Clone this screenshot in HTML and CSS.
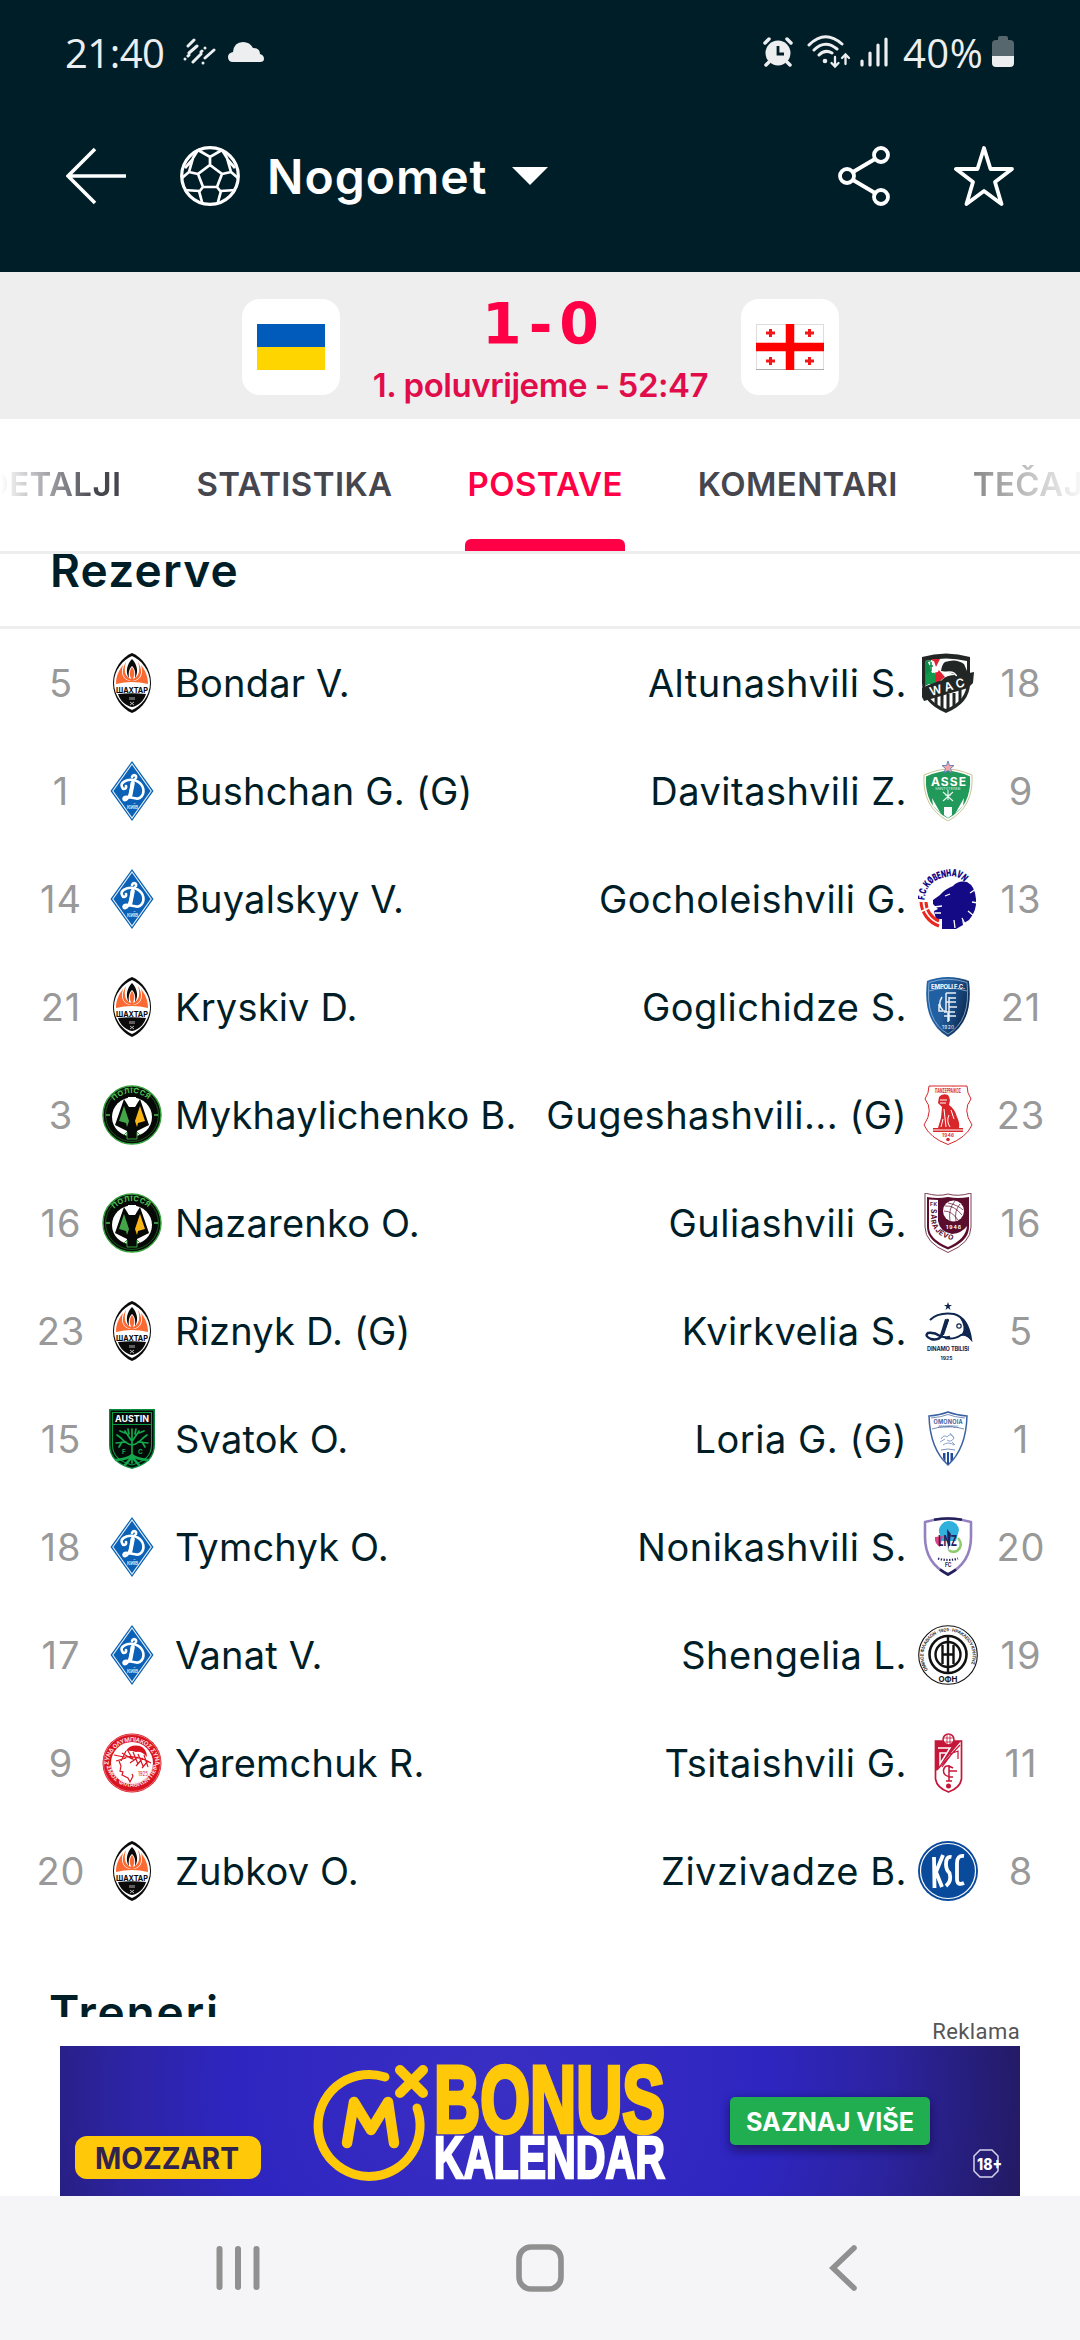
FILE: index.html
```html
<!DOCTYPE html>
<html lang="hr">

<head>
  <meta charset="UTF-8">
  <meta name="viewport" content="width=device-width, initial-scale=1.0">
  <title>Nogomet - Postave</title>
  <link rel="stylesheet" href="styles.css">
</head>

<body>
  <!-- club crests -->
  <svg class="defs" width="0" height="0">
    <defs>
      <linearGradient id="blueShade" x1="0" y1="0" x2="1" y2="0.4">
        <stop offset="0" stop-color="#1c62a8"/>
        <stop offset="0.5" stop-color="#235f9f"/>
        <stop offset="1" stop-color="#0c2c55"/>
      </linearGradient>

      <symbol id="shakhtar" viewBox="0 0 60 60">
        <path d="M30 0C40 4 49 16 49 30S40 56 30 60C20 56 11 44 11 30S20 4 30 0Z" fill="#0a0a0a"/>
        <path d="M30 3C39 7 48 17 48 30S39 53 30 57C21 53 12 43 12 30S21 7 30 3Z" fill="#fff"/>
        <path d="M21 12C17 17 14 23 14 31Q30 27 46 31C46 23 43 17 39 12C42 22 38 28 30 28S18 22 21 12Z" fill="#fa6a32"/>
        <path d="M24 9C18 19 21 27 30 28C39 27 42 19 36 9C39 19 36 25 30 26C24 25 21 19 24 9Z" fill="#fa6a32"/>
        <path d="M30 6C25 11 23 19 27 25C26 18 28 15 30 13C32 15 34 18 33 25C37 19 35 11 30 6Z" fill="#0a0a0a"/>
        <path d="M30 14C27 18 27 23 30 27C33 23 33 18 30 14Z" fill="#fa6a32"/>
        <text x="14" y="39.5" font-size="8" font-weight="700" textLength="32" lengthAdjust="spacingAndGlyphs" fill="#0a0a0a">ШАХТАР</text>
        <path d="M16 41Q30 39.500 44 41C42 48 36 53 30 54C24 53 18 48 16 41Z" fill="#0a0a0a"/>
        <path d="M28 44v3M30 44v3M32 44v3M28 49l4 3M32 49l-4 3" stroke="#ddd" stroke-width="0.800" fill="none"/>
      </symbol>

      <symbol id="dynamo" viewBox="0 0 60 60">
        <path d="M30 0L51.500 30L30 60L8.500 30Z" fill="#0a61b5"/>
        <path d="M30 3L49.200 30L30 57L10.800 30Z" fill="none" stroke="#e8f1fa" stroke-width="1.100"/>
        <path d="M30 16C31 13 35 14 34 17C33 19 31 19 30 22C29 30 29 34 25 38C22 41 20 37 23 36C30 35 37 42 41 33C43 26 38 20 31 19C24 18 18 22 20 26C21 29 25 28 24 25" fill="none" stroke="#fff" stroke-width="2.600" stroke-linecap="round"/>
        <path d="M31 21L28 36" stroke="#fff" stroke-width="4"/>
        <text x="25" y="47.500" font-size="5" font-weight="700" textLength="11" lengthAdjust="spacingAndGlyphs" fill="#d8e7f5">КИЇВ</text>
      </symbol>

      <symbol id="polissya" viewBox="0 0 60 60">
        <circle cx="30" cy="30" r="29" fill="#060906" stroke="#35a13c" stroke-width="1.400"/>
        <circle cx="30" cy="30" r="26.500" fill="none" stroke="#237a2b" stroke-width="0.700"/>
        <ellipse cx="30" cy="32" rx="20" ry="19.500" fill="#fff"/>
        <path d="M22 14L27 22H33L38 14L47 40L35 46V54H25V46L13 40Z" fill="#060906"/>
        <path d="M26 12h8v9h-8z" fill="#fff"/>
        <path d="M22 21L27 36L25 42L24 38L17 36Z" fill="#43a548"/>
        <path d="M38 21L33 36L35 42L36 38L43 36Z" fill="#f9b515"/>
        <path d="M22 50L25 47V54H35V47L38 50" stroke="#35a13c" stroke-width="1" fill="none"/>
        <path id="polArc" d="M12 16Q30 0 48 16" fill="none"/>
        <text font-size="7.500" font-weight="700" fill="#4fbf55"><textPath href="#polArc" textLength="38">ПОЛІССЯ</textPath></text>
        <path d="M4 30h4M52 30h4" stroke="#4fbf55" stroke-width="1.500"/>
      </symbol>

      <symbol id="austin" viewBox="0 0 60 60">
        <path d="M7 0H53V36Q53 54 30 60Q7 54 7 36Z" fill="#0a8a3c"/>
        <path d="M8.500 1.500H51.500V36Q51.500 53 30 58.500Q8.500 53 8.500 36Z" fill="#050a08"/>
        <path d="M10.500 3.500H49.500V36Q49.500 51 30 56Q10.500 51 10.500 36ZM10 15.500H50" fill="none" stroke="#0b9a42" stroke-width="1.100"/>
        <text x="13" y="12.800" font-size="9.500" font-weight="700" textLength="34" lengthAdjust="spacingAndGlyphs" fill="#fff">AUSTIN</text>
        <g fill="none" stroke="#12a84b" stroke-width="1.700" stroke-linecap="round">
          <path d="M30 54V33M30 34L30 20M30 36Q24 35 19 29M30 36Q36 35 41 29M29 31L23 22M31 31L37 22M24 33L14 34M36 33L46 34M19 29L15 26M41 29L45 26M23 24L18 22M37 24L42 22M20 33L17 38M40 33L43 38M27 25L26 20M33 25L34 20"/>
          <path d="M30 46Q26 50 14 51M30 46Q34 50 46 51M30 48L23 56M30 48L37 56" stroke-width="2.600"/>
        </g>
        <text x="20" y="45" font-size="6.500" font-weight="700" fill="#12a84b">F</text>
        <text x="36" y="45" font-size="6.500" font-weight="700" fill="#12a84b">C</text>
      </symbol>

      <symbol id="olympiacos" viewBox="0 0 60 60">
        <circle cx="30" cy="30" r="29.500" fill="#da1320"/>
        <circle cx="30" cy="30" r="21" fill="#fff"/>
        <circle cx="30" cy="30" r="28.500" fill="none" stroke="#f3a3a8" stroke-width="0.600"/>
        <path id="olyTop" d="M6.500 32A23.500 23.500 0 1 1 53.500 32" fill="none"/>
        <path id="olyBot" d="M4.500 33A26 26 0 0 0 55.500 33" fill="none"/>
        <text font-size="6" font-weight="700" fill="#fbdadb"><textPath href="#olyTop" textLength="74">ΣΥΝΔ ΟΛΥΜΠΙΑΚΟΣ ΣΥΝΔ</textPath></text>
        <text font-size="6" font-weight="700" fill="#fbdadb"><textPath href="#olyBot" textLength="72">ΣΜΟΣ ΦΙΛΑΘΛΩΝ ΠΕΙΡ</textPath></text>
        <path d="M24 18Q28 11 38 13Q45 16 45 24Q40 18 34 19Q28 17 24 18Z" fill="#da1320"/>
        <path d="M17 28L19 33L18 38L21 39L20 42L26 45L28 49L31 43L30 41M24 18L19 28M12 22L22 24M14 28L24 25M20 20L30 26M26 18L32 28M31 19L36 31M36 21L41 33M42 22L46 34M22 24Q36 22 49 30M28 30L36 24M34 33L41 25M40 35L46 28" fill="none" stroke="#da1320" stroke-width="1.200"/>
        <text x="36" y="43" font-size="5.500" fill="#da1320" textLength="10" lengthAdjust="spacingAndGlyphs">1925</text>
      </symbol>

      <symbol id="wac" viewBox="0 0 60 60">
        <path d="M4 4Q28 -3 52 4V30Q52 50 28 60Q4 50 4 30Z" fill="#222726"/>
        <path d="M7 8Q28 3 49 8V28Q49 48 28 56Q7 48 7 30Z" fill="#fff"/>
        <path d="M7 8L13 7V30L7 33Z" fill="#0b8a43"/>
        <path d="M14 16L22 28L14 31H8V22Z" fill="#12994b"/>
        <path d="M14 6H24L20 16L27 24L18 31L17 18Z" fill="#df2330"/>
        <path d="M10 9L16 8L18 14L22 6L25 6L20 19L14 20Z" fill="#fff"/>
        <path d="M13 9L13 18M10 13h5" stroke="#0b8a43" stroke-width="1.500"/>
        <path d="M27 9Q38 5 46 11L49 18V28H31L24 27Q28 22 38 22L30 19L23 18Q24 11 27 9Z" fill="#222726"/>
        <path d="M26 20Q36 17 39 24" fill="none" stroke="#fff" stroke-width="1.500"/>
        <path d="M18 43V52M24 42V56M30 41V57M36 40V55M42 37V50" stroke="#222726" stroke-width="3"/>
        <path d="M4 35Q22 26 56 19L55 30L50 35L6 48L4 44Z" fill="#222726"/>
        <text transform="translate(13 43) rotate(-16)" font-size="12" font-weight="600" textLength="36" fill="#fff">WAC</text>
      </symbol>

      <symbol id="asse" viewBox="0 0 60 60">
        <path d="M6 14Q20 8 30 8Q40 8 54 14Q56 46 30 60Q4 46 6 14Z" fill="#fff" stroke="#c2bd84" stroke-width="0.900"/>
        <path d="M8 15.500Q20 10 30 10Q40 10 52 15.500Q54 45 30 57.500Q6 45 8 15.500Z" fill="#20995a"/>
        <path d="M30 0L31.500 4.500H36L32.500 7.500L34 12L30 9.500L26 12L27.500 7.500L24 4.500H28.500Z" fill="#f2a7a9" stroke="#4f74b8" stroke-width="0.800"/>
        <text x="13" y="25" font-size="12" font-weight="700" textLength="35" fill="#fff">ASSE</text>
        <text x="17" y="28.800" font-size="4" textLength="26" fill="#cfeadb">SAINT-ÉTIENNE</text>
        <path d="M25 31l10 9M35 31l-10 9M30 29v10M27 34h6" stroke="#e8f6ee" stroke-width="1.100"/>
        <path d="M14 37L23 53L15 45ZM46 37L37 53L45 45ZM26 46h8v8l-4 3l-4-3z" fill="#fff"/>
      </symbol>

      <symbol id="kobenhavn" viewBox="0 0 60 60">
        <path d="M35 17Q40 11 49 13Q57 17 58 30Q59 42 51 51L46 54L44 50L45 56L38 60H24V50H18L16 42L20 40L15 35V31L22 26Q27 20 35 17Z" fill="#140a86"/>
        <path d="M52 24l6-4M54 33l6 1M50 42l6 5M44 49l3 6M36 51l1 8M16 38l8-1M27 27l5-2M17 44h6" stroke="#fff" stroke-width="1.300" fill="none"/>
        <path id="kobArc" d="M6.500 31Q8 12 28 8Q38 5 45 12" fill="none"/>
        <text font-size="10" font-weight="900" fill="#140a86"><textPath href="#kobArc" textLength="54" lengthAdjust="spacingAndGlyphs">F.C.KØBENHAVN</textPath></text>
        <path d="M3 33A27 27 0 0 0 21 57" fill="none" stroke="#e8281e" stroke-width="3"/>
        <path d="M8 33A21 21 0 0 0 21 52" fill="none" stroke="#e8281e" stroke-width="3"/>
        <path d="M2 43L11 39" stroke="#fff" stroke-width="1.500"/>
      </symbol>

      <symbol id="empoli" viewBox="0 0 60 60">
        <path d="M9 4Q30 -4 51 4Q56 45 30 60Q4 45 9 4Z" fill="url(#blueShade)"/>
        <path d="M11 5.500Q30 -1 49 5.500Q53 44 30 57Q7 44 11 5.500Z" fill="none" stroke="#a9c6e4" stroke-width="0.700"/>
        <path d="M11 14Q30 8 49 14" fill="none" stroke="#a9c6e4" stroke-width="0.700"/>
        <text x="13" y="11.500" font-size="6" font-weight="700" textLength="34" fill="#fff">EMPOLI F.C.</text>
        <path d="M28 16H38M28 16V35M28 25H38M26 35H37M31 20V44M31 21H38M31 30H39M31 39H38M24 20Q19 28 25 33M21 27V34H27M26 39H34M30 36V45" fill="none" stroke="#e7f0f8" stroke-width="1.500"/>
        <text x="24" y="52" font-size="4.800" textLength="12" fill="#fff">1920</text>
      </symbol>

      <symbol id="panserraikos" viewBox="0 0 60 60">
        <path d="M11 1H49Q49 8 53 14Q44 25 54 40Q48 53 30 59.500Q12 53 6 40Q16 25 7 14Q11 8 11 1Z" fill="#fff" stroke="#d8262a" stroke-width="1"/>
        <text x="17" y="7.500" font-size="5.500" font-weight="700" textLength="26" lengthAdjust="spacingAndGlyphs" fill="#d8262a">ΠΑΝΣΕΡΡΑΪΚΟΣ</text>
        <path d="M21 12Q24 8 30 10Q33 14 31 20Q37 24 39 32Q42 38 41 43H45V47H15V43H20L23 33L24 22L20 18Z" fill="#d8262a"/>
        <path d="M22 15h7M22 18h6M26 24l2 18M31 30q-3 6 1 12M25 34l-2 8M33 25l3 9M15 45h30" stroke="#fff" stroke-width="1" fill="none"/>
        <text x="24" y="52" font-size="4.500" font-weight="700" textLength="12" fill="#d8262a">1946</text>
        <circle cx="30" cy="54.500" r="1.800" fill="#d8262a"/>
      </symbol>

      <symbol id="sarajevo" viewBox="0 0 60 60">
        <path d="M7 0Q20 4 30 1Q40 4 53 0V34Q53 50 30 59.500Q7 50 7 34Z" fill="#fff" stroke="#6d2a42" stroke-width="0.900"/>
        <path d="M9 4Q20 6 30 4Q40 6 51 4V34Q51 48 30 56.500Q9 48 9 34Z" fill="#5a0d2c"/>
        <path d="M11 6.500L20 7V28Q22 39 34 41Q44 40 49 33Q48 46 30 54Q11 46 11 34Z" fill="#fff"/>
        <circle cx="35.500" cy="18" r="10.500" fill="#fff"/>
        <path d="M27 13Q36 12 44 22M26 18Q34 18 40 27M30 10Q40 12 45 17M37 8Q30 16 32 28M42 11Q36 18 38 28" fill="none" stroke="#5a0d2c" stroke-width="0.700"/>
        <text x="28" y="36" font-size="5" font-weight="700" textLength="15" fill="#fff">1946</text>
        <text x="12" y="13" font-size="5" font-weight="700" textLength="7" fill="#5a0d2c">FK</text>
        <path id="sarArc" d="M13 16V28Q16 45 40 48" fill="none"/>
        <text font-size="7" font-weight="700" fill="#5a0d2c"><textPath href="#sarArc" textLength="43">SARAJEVO</textPath></text>
      </symbol>

      <symbol id="tbilisi" viewBox="0 0 60 60">
        <path d="M30 1L31 4H34L31.500 5.800L32.500 9L30 7L27.500 9L28.500 5.800L26 4H29Z" fill="#0f2750"/>
        <path d="M12 19Q20 11 36 13Q50 17 53 38Q48 32 43 34Q36 39 27 37" fill="none" stroke="#0f2750" stroke-width="2"/>
        <path d="M40 14Q51 20 53 39Q47 33 42 35Q50 28 40 14Z" fill="#0f2750"/>
        <path d="M30 18Q27 27 24 34Q21 40 13 38Q6 35 10 32Q16 31 22 35Q27 37 32 36" fill="none" stroke="#0f2750" stroke-width="2.400"/>
        <path d="M27 18L31 19L26 34L22 34Z" fill="#0f2750"/>
        <circle cx="41" cy="25" r="2.200" fill="none" stroke="#0f2750" stroke-width="1.200"/>
        <text x="9" y="50" font-size="5.600" font-weight="700" textLength="42" fill="#0f2750">DINAMO TBILISI</text>
        <text x="22.500" y="58.500" font-size="5" font-weight="700" textLength="12" fill="#0f2750">1925</text>
      </symbol>

      <symbol id="omonoia" viewBox="0 0 60 60">
        <path d="M11 7Q22 6 30 3Q38 6 49 7Q48 40 30 56Q12 40 11 7Z" fill="#fff" stroke="#3d62a3" stroke-width="1.500"/>
        <path d="M13 9Q24 8 30 5.500Q36 8 47 9M14 20Q30 15 46 20M23 41Q30 39 37 41" fill="none" stroke="#3d62a3" stroke-width="0.700"/>
        <text x="15.500" y="14.500" font-size="5.500" font-weight="700" textLength="29" fill="#3d62a3">OMONOIA</text>
        <text x="20" y="18.500" font-size="3.500" textLength="20" fill="#3d62a3">ARADIPPOU</text>
        <path d="M23 30q3-5 6-2q4-5 7 1q-3 5-7 2M25 36q5-4 11 0M32 24l4 5M22 33l5-3M34 33l3 3" fill="none" stroke="#86a0c9" stroke-width="1"/>
        <path d="M25 44h2.500v9L25 49zM29 43h2v12h-2zM32.500 44H35v6l-2.500 3z" fill="#1f4a97"/>
      </symbol>

      <symbol id="lnz" viewBox="0 0 60 60">
        <path d="M7 5Q30 -2 53 5V20Q53 46 30 57.500Q7 46 7 20Z" fill="#fff" stroke="#9581bf" stroke-width="2.600" stroke-linejoin="round"/>
        <path d="M16 2.800Q30 0.300 44 2.800" stroke="#24205a" stroke-width="2.600" fill="none"/>
        <path d="M22 52.500Q26 55.500 30 57.500Q34 55.500 38 52.500" stroke="#24205a" stroke-width="2.800" fill="none"/>
        <path d="M21 15A10 10 0 0 1 41 13L38 24H24Z" fill="#2fb0dd"/>
        <path d="M17 20Q16 26 22 30L25 19Z" fill="#d9428d"/>
        <path d="M40 21Q46 28 39 34Q33 36 31 33" fill="none" stroke="#8ecb6a" stroke-width="2.500"/>
        <text x="20" y="29" font-size="15" font-weight="700" textLength="19" lengthAdjust="spacingAndGlyphs" fill="#24205a">LNZ</text>
        <path d="M29 12L33 17L30 34Z" fill="#24205a"/>
        <path d="M20 41.500Q30 44.500 40 41.500" fill="none" stroke="#24205a" stroke-width="2.200" stroke-dasharray="1.300 1.500"/>
        <text x="27" y="50" font-size="5.800" font-weight="700" textLength="6.500" lengthAdjust="spacingAndGlyphs" fill="#24205a">FC</text>
      </symbol>

      <symbol id="ofi" viewBox="0 0 60 60">
        <circle cx="30" cy="30" r="29.300" fill="#fff" stroke="#111" stroke-width="1.100"/>
        <circle cx="30" cy="29.500" r="18.500" fill="none" stroke="#111" stroke-width="2.600"/>
        <circle cx="30" cy="29.500" r="12.500" fill="none" stroke="#111" stroke-width="2.400"/>
        <path d="M30 11V49M24.500 20V39M35.500 20V39M24.500 29.500H35.500" stroke="#111" stroke-width="2.400"/>
        <path id="ofiArc" d="M10 45A24.500 24.500 0 1 1 50 45" fill="none"/>
        <text font-size="4.500" font-weight="700" fill="#333"><textPath href="#ofiArc" textLength="100">ΟΜΙΛΟΣ ΦΙΛΑΘΛΩΝ · 1925 · ΗΡΑΚΛΕΙΟΥ ΚΡΗΤΗΣ</textPath></text>
        <text x="20.500" y="56.800" font-size="8" font-weight="700" textLength="19" lengthAdjust="spacingAndGlyphs" fill="#111">ΟΦΗ</text>
      </symbol>

      <symbol id="granada" viewBox="0 0 60 60">
        <path d="M17.500 8H43.500V46Q42 55 30.500 59Q19 55 17.500 46Z" fill="#fff" stroke="#c4173a" stroke-width="1.700"/>
        <path d="M18 8H43L18 38Z" fill="#c4173a"/>
        <circle cx="30.500" cy="6.500" r="5.500" fill="#fff" stroke="#c4173a" stroke-width="1.500"/>
        <path d="M26 5h9M26 9h9M29 2v9M32 2v9" stroke="#c4173a" stroke-width="0.800"/>
        <path d="M20 15H32L22 31V20H28" fill="none" stroke="#fff" stroke-width="1.500"/>
        <path d="M42 12L19 37M32 21L40 18V26M36 18L24 34" fill="none" stroke="#c4173a" stroke-width="1.200"/>
        <path d="M35 35Q27 30 25.500 37Q25 44 35 44M31 32V48M31 38H39M28 48H34" fill="none" stroke="#c4173a" stroke-width="1.500"/>
        <circle cx="30.500" cy="53" r="2.500" fill="#c4173a"/>
      </symbol>

      <symbol id="ksc" viewBox="0 0 60 60">
        <circle cx="30" cy="30" r="30" fill="#0a4a9b"/>
        <circle cx="30" cy="30" r="27.500" fill="none" stroke="#fff" stroke-width="1.200"/>
        <g fill="none" stroke="#fff" stroke-width="3.800">
          <path d="M16 16L16.500 47M25 14L18 31L24 46"/>
          <path d="M33.500 16Q28 15 28 23Q28 29 31.500 32Q34 40 28 45" />
          <path d="M46 15Q39 14 39 22V38Q39 45 46 42"/>
        </g>
      </symbol>
    </defs>
  </svg>

  <div class="phone">
    <header class="top">
      <div class="status">
        <span class="time">21:40</span>
        <svg class="rain" width="34" height="28" viewBox="0 0 34 28">
          <g stroke="#eceef0" stroke-width="3" stroke-linecap="round">
            <path d="M5 8L11 2M2 21L2 21M6 15L14 8M5 18L6 17M10 24L18 16M22 10L22 10M18 14L19 13M22 20L31 12M20 25L20 25"/>
          </g>
        </svg>
        <svg class="cloud" width="38" height="22" viewBox="0 0 38 22">
          <path d="M6 21Q1 21 1 16Q1 12 6 11Q7 1 16 1Q23 1 26 7Q33 7 33 13Q37 14 37 18Q37 21 33 21Z" fill="#eceef0"/>
        </svg>
        <svg class="alarm" width="30" height="30" viewBox="0 0 30 30">
          <circle cx="15" cy="16" r="12.500" fill="#eceef0"/>
          <path d="M2 6L6 2M28 6L24 2M6 25L3 28M24 25L27 28" stroke="#eceef0" stroke-width="3.500" stroke-linecap="round"/>
          <path d="M15 9V17H21" fill="none" stroke="#001e28" stroke-width="2.800"/>
        </svg>
        <svg class="wifi" width="44" height="34" viewBox="0 0 44 34">
          <g fill="none" stroke="#eceef0" stroke-width="3" stroke-linecap="round">
            <path d="M2 10Q18 -6 35 9M7 15Q18 4 30 14M12 20Q18 14 25 18"/>
            <path d="M28 22V31M24.500 28L28 31.500L31.500 28M38.500 29V20M35 23L38.500 19.500L42 23" stroke-width="2.300"/>
          </g>
          <circle cx="18" cy="26" r="2.300" fill="#eceef0"/>
        </svg>
        <svg class="signal" width="28" height="30" viewBox="0 0 28 30">
          <path d="M2 24V28M10 16V28M18 8V28M26 2V28" stroke="#eceef0" stroke-width="3.200" stroke-linecap="round"/>
        </svg>
        <span class="percent">40%</span>
        <svg class="battery" width="22" height="32" viewBox="0 0 22 32">
          <path d="M6 4V2Q6 0 8 0H14Q16 0 16 2V4H18Q22 4 22 8V20H0V8Q0 4 4 4Z" fill="#57676e"/>
          <path d="M0 20H22V27Q22 31 18 31H4Q0 31 0 27Z" fill="#eceef0"/>
        </svg>
      </div>

      <div class="title-bar">
        <svg width="60" height="60" viewBox="0 0 60 60">
          <path d="M2 30H60M29 3L2 30L29 57" fill="none" stroke="#fff" stroke-width="3.600"/>
        </svg>
        <svg class="ball" width="60" height="60" viewBox="0 0 60 60">
          <g fill="none" stroke="#fff" stroke-width="3.200">
            <circle cx="30" cy="30" r="28.300"/>
            <path d="M30 19L42 28L37 41H23L18 28ZM30 19V11M42 28L51 26M37 41L41 46M23 41L19 46M18 28L9 26M18 4L30 11L42 4M51 26L47 12L42 4M51 26L58 32M9 26L13 12L18 4M9 26L2 32M4 44L19 45L22 56M56 44L41 45L38 56M47 13L55 22M13 13L5 22" stroke-width="2.700"/>
          </g>
        </svg>
        <h1>Nogomet</h1>
        <svg width="36" height="18" viewBox="0 0 36 18"><path d="M0 0H36L18 18Z" fill="#fff"/></svg>
        <svg class="share" width="52" height="60" viewBox="0 0 52 60">
          <g fill="none" stroke="#fff" stroke-width="3.800">
            <circle cx="9" cy="30" r="7"/>
            <circle cx="43" cy="9" r="7"/>
            <circle cx="43" cy="51" r="7"/>
            <path d="M15 26L37 13M15 34L37 47"/>
          </g>
        </svg>
        <svg class="star" width="60" height="60" viewBox="0 0 60 60">
          <path d="M30 2L36.500 23H58L41 36L47.500 58L30 45L12.500 58L19 36L2 23H23.500Z" fill="none" stroke="#fff" stroke-width="3.800" stroke-linejoin="round"/>
        </svg>
      </div>
    </header>

    <section class="score-bar">
      <div class="team">
        <svg width="68" height="46" viewBox="0 0 68 46">
          <rect width="68" height="23" fill="#005bbb"/>
          <rect y="23" width="68" height="23" fill="#ffd500"/>
        </svg>
      </div>
      <div class="result">
        <div class="score">1-0</div>
        <div class="period">1. poluvrijeme - 52:47</div>
      </div>
      <div class="team">
        <svg width="68" height="46" viewBox="0 0 68 46">
          <rect x="0.500" y="0.500" width="67" height="45" fill="#fff" stroke="#ddd"/>
          <path d="M0 45.500H68" stroke="#aaa"/>
          <path d="M34 0V46M0 23H68" stroke="#f00" stroke-width="8.500"/>
          <path d="M14.500 5V13M10 9H19M53.500 5V13M49 9H58M14.500 33V41M10 37H19M53.500 33V41M49 37H58" stroke="#f01818" stroke-width="3"/>
        </svg>
      </div>
    </section>

    <nav class="tabs">
      <a>DETALJI</a>
      <a>STATISTIKA</a>
      <a class="active">POSTAVE</a>
      <a>KOMENTARI</a>
      <a>TEČAJEVI</a>
    </nav>

    <main class="lineups">
      <h2 class="reserves">Rezerve</h2>

      <div class="rows">
        <div class="row">
          <span class="num">5</span><svg class="crest"><use href="#shakhtar"/></svg><span class="name">Bondar V.</span>
          <span class="name away">Altunashvili S.</span><svg class="crest"><use href="#wac"/></svg><span class="num">18</span>
        </div>
        <div class="row">
          <span class="num">1</span><svg class="crest"><use href="#dynamo"/></svg><span class="name">Bushchan G. (G)</span>
          <span class="name away">Davitashvili Z.</span><svg class="crest"><use href="#asse"/></svg><span class="num">9</span>
        </div>
        <div class="row">
          <span class="num">14</span><svg class="crest"><use href="#dynamo"/></svg><span class="name">Buyalskyy V.</span>
          <span class="name away">Gocholeishvili G.</span><svg class="crest"><use href="#kobenhavn"/></svg><span class="num">13</span>
        </div>
        <div class="row">
          <span class="num">21</span><svg class="crest"><use href="#shakhtar"/></svg><span class="name">Kryskiv D.</span>
          <span class="name away">Goglichidze S.</span><svg class="crest"><use href="#empoli"/></svg><span class="num">21</span>
        </div>
        <div class="row">
          <span class="num">3</span><svg class="crest"><use href="#polissya"/></svg><span class="name">Mykhaylichenko B.</span>
          <span class="name away">Gugeshashvili... (G)</span><svg class="crest"><use href="#panserraikos"/></svg><span class="num">23</span>
        </div>
        <div class="row">
          <span class="num">16</span><svg class="crest"><use href="#polissya"/></svg><span class="name">Nazarenko O.</span>
          <span class="name away">Guliashvili G.</span><svg class="crest"><use href="#sarajevo"/></svg><span class="num">16</span>
        </div>
        <div class="row">
          <span class="num">23</span><svg class="crest"><use href="#shakhtar"/></svg><span class="name">Riznyk D. (G)</span>
          <span class="name away">Kvirkvelia S.</span><svg class="crest"><use href="#tbilisi"/></svg><span class="num">5</span>
        </div>
        <div class="row">
          <span class="num">15</span><svg class="crest"><use href="#austin"/></svg><span class="name">Svatok O.</span>
          <span class="name away">Loria G. (G)</span><svg class="crest"><use href="#omonoia"/></svg><span class="num">1</span>
        </div>
        <div class="row">
          <span class="num">18</span><svg class="crest"><use href="#dynamo"/></svg><span class="name">Tymchyk O.</span>
          <span class="name away">Nonikashvili S.</span><svg class="crest"><use href="#lnz"/></svg><span class="num">20</span>
        </div>
        <div class="row">
          <span class="num">17</span><svg class="crest"><use href="#dynamo"/></svg><span class="name">Vanat V.</span>
          <span class="name away">Shengelia L.</span><svg class="crest"><use href="#ofi"/></svg><span class="num">19</span>
        </div>
        <div class="row">
          <span class="num">9</span><svg class="crest"><use href="#olympiacos"/></svg><span class="name">Yaremchuk R.</span>
          <span class="name away">Tsitaishvili G.</span><svg class="crest"><use href="#granada"/></svg><span class="num">11</span>
        </div>
        <div class="row">
          <span class="num">20</span><svg class="crest"><use href="#shakhtar"/></svg><span class="name">Zubkov O.</span>
          <span class="name away">Zivzivadze B.</span><svg class="crest"><use href="#ksc"/></svg><span class="num">8</span>
        </div>
      </div>

      <h2 class="coaches">Treneri</h2>
    </main>

    <aside class="ad">
      <div class="ad-label">Reklama</div>
      <svg class="banner" width="960" height="150" viewBox="0 0 960 150">
        <defs>
          <radialGradient id="adBg" gradientUnits="userSpaceOnUse" cx="440" cy="40" r="540" gradientTransform="translate(0 10) scale(1 0.900)">
            <stop offset="0" stop-color="#3a2fc4"/>
            <stop offset="0.500" stop-color="#2e25c0"/>
            <stop offset="0.720" stop-color="#2c23a0"/>
            <stop offset="1" stop-color="#221a5e"/>
          </radialGradient>
          <filter id="soft" x="-20%" y="-40%" width="140%" height="180%"><feGaussianBlur stdDeviation="5"/></filter>
        </defs>
        <rect width="960" height="150" fill="url(#adBg)"/>

        <rect x="15" y="90" width="186" height="43" rx="12" fill="#ffc90a"/>
        <text x="35" y="123" font-size="30" font-weight="700" textLength="144" lengthAdjust="spacingAndGlyphs" fill="#30244e">MOZZART</text>

        <g fill="none" stroke="#ffc90a" stroke-width="9" stroke-linecap="round">
          <path d="M325 31A51 51 0 1 0 357 62"/>
          <path d="M287 97L294 56L311 84L328 56L334 97" stroke-width="10.500" stroke-linejoin="round"/>
          <path d="M340 24L363 47M363 24L340 47" stroke-width="10"/>
        </g>

        <g class="ad-caps">
          <text transform="translate(374 86) scale(1 1.500)" font-size="63" textLength="231" lengthAdjust="spacingAndGlyphs" fill="#ffc90a" stroke="#ffc90a" stroke-width="3">BONUS</text>
          <text transform="translate(374 132) scale(1 1.300)" font-size="46" textLength="231" lengthAdjust="spacingAndGlyphs" fill="#fff" stroke="#fff" stroke-width="2">KALENDAR</text>
        </g>

        <rect x="670" y="54" width="200" height="50" rx="6" fill="#151044" opacity="0.700" filter="url(#soft)"/>
        <rect x="670" y="51" width="200" height="48" rx="5" fill="#20ae51"/>
        <text x="686" y="84.500" font-size="25" font-weight="700" textLength="168" lengthAdjust="spacingAndGlyphs" fill="#fff">SAZNAJ VIŠE</text>

        <path d="M920 104H932L938 110V125L932 131H920L914 125V110Z" fill="none" stroke="#d5d2ea" stroke-width="1.500"/>
        <text x="917" y="124" font-size="16" font-weight="800" textLength="25" lengthAdjust="spacingAndGlyphs" fill="#fff">18+</text>
      </svg>
    </aside>

    <footer class="sys-nav">
      <svg width="44" height="46" viewBox="0 0 44 46"><path d="M3.500 4V42M22 4V42M40.500 4V42" stroke="#909090" stroke-width="6" stroke-linecap="round"/></svg>
      <svg class="home" width="48" height="48" viewBox="0 0 48 48"><rect x="3" y="3" width="42" height="42" rx="12" fill="none" stroke="#909090" stroke-width="5.600"/></svg>
      <svg width="28" height="46" viewBox="0 0 28 46"><path d="M25 3L4 23L25 43" fill="none" stroke="#909090" stroke-width="5.600" stroke-linecap="round"/></svg>
    </footer>
  </div>
</body>

</html>
```

FILE: styles.css
```css
body {
  margin: 0;
  background: #fff;
  font-family: Inter, "Liberation Sans", sans-serif;
  color: #001e28;
}

svg {
  flex-shrink: 0;
}

svg.defs {
  display: block;
  height: 0;
}

.phone {
  display: flex;
  flex-direction: column;
  width: 1080px;
  height: 2340px;
  overflow: hidden;
}

/* status bar + title */
.top {
  height: 272px;
  background: #001e28;
  color: #fff;
}

.status {
  display: flex;
  align-items: center;
  height: 104px;
  padding: 0 66px 0 65px;
  color: #eceef0;
  font-family: "Open Sans", sans-serif;
  font-size: 40px;
}

.time {
  width: 118px;
  letter-spacing: -0.5px;
}

.cloud {
  margin-left: 10px;
}

.alarm {
  margin-left: auto;
}

.wifi {
  margin-left: 14px;
}

.signal {
  margin: 0 15px 0 9px;
}

.percent {
  width: 86px;
  margin-right: 3px;
  letter-spacing: 0.5px;
}

.title-bar {
  display: flex;
  align-items: center;
  height: 144px;
  padding: 0 66px;
}

.ball {
  margin-left: 54px;
}

h1 {
  width: 222px;
  margin: 0 23px 0 27px;
  font-size: 48px;
  font-weight: 600;
  letter-spacing: 1px;
}

.share {
  margin-left: auto;
}

.star {
  margin-left: 64px;
}

/* score */
.score-bar {
  display: flex;
  justify-content: center;
  height: 147px;
  background: #eee;
}

.team {
  display: flex;
  align-items: center;
  justify-content: center;
  width: 98px;
  height: 96px;
  margin-top: 27px;
  border-radius: 18px;
  background: #fff;
}

.result {
  width: 402px;
  margin-right: -1px;
  text-align: center;
}

.score {
  height: 60px;
  margin-top: 22px;
  padding-left: 7px;
  color: #ff0046;
  font-family: "DejaVu Sans", sans-serif;
  font-size: 57px;
  font-weight: 700;
  letter-spacing: 7px;
  line-height: 60px;
}

.period {
  margin-top: 11px;
  color: #e10d4b;
  font-size: 33px;
  font-weight: 600;
  letter-spacing: -0.45px;
  line-height: 40px;
  white-space: nowrap;
}

/* tabs */
.tabs {
  display: flex;
  height: 132px;
  margin-left: -15px;
  border-bottom: 3px solid #eee;
  color: #46464f;
  font-size: 33px;
  font-weight: 600;
  letter-spacing: 0.4px;
  line-height: 131px;
}

.tabs a {
  position: relative;
  flex-shrink: 0;
  margin-right: 75px;
}

.tabs a:first-child {
  background: linear-gradient(90deg, #fff 16px, #46464f 110px);
  background-clip: text;
  color: transparent;
}

.tabs a:last-child {
  background: linear-gradient(90deg, #888 0, #fff 115px);
  background-clip: text;
  color: transparent;
}

.tabs .active {
  color: #ff0046;
}

.tabs .active::after {
  content: "";
  position: absolute;
  left: -2px;
  right: -2px;
  bottom: 0;
  height: 12px;
  border-radius: 6px 6px 0 0;
  background: #ff0046;
}

/* lineups */
.lineups {
  height: 1463px;
  overflow: hidden;
}

h2 {
  margin: 0;
  padding-left: 50px;
  font-size: 46px;
  font-weight: 600;
  letter-spacing: 1.2px;
}

.reserves {
  height: 72px;
  border-bottom: 3px solid #eee;
  line-height: 32px;
}

.rows {
  height: 1349px;
}

.row {
  display: flex;
  align-items: center;
  height: 108px;
  padding: 0 29px 0 31px;
}

.num {
  width: 60px;
  color: #999;
  font-size: 38px;
  letter-spacing: 1px;
  text-align: center;
}

.crest {
  width: 60px;
  height: 60px;
  margin: 0 11px;
}

.away + .crest {
  margin-right: 13px;
}

.crest + .name {
  margin-left: 2px;
}

.name {
  font-size: 38px;
  letter-spacing: 0.2px;
  white-space: nowrap;
}

.away {
  margin-left: auto;
  letter-spacing: 0.5px;
}

.coaches {
  padding-left: 49px;
  letter-spacing: 1.8px;
  line-height: 68px;
}

/* ad */
.ad {
  height: 179px;
}

.ad-label {
  height: 29px;
  padding-right: 60px;
  color: #555;
  font-family: Roboto, sans-serif;
  font-size: 22px;
  letter-spacing: 0.4px;
  line-height: 29px;
  text-align: right;
}

.banner {
  display: block;
  margin-left: 60px;
}

.ad-caps {
  font-family: "Liberation Sans Narrow", "Liberation Sans", sans-serif;
  font-weight: 700;
}

.sys-nav {
  display: flex;
  align-items: center;
  justify-content: space-between;
  flex: 1;
  padding: 0 223px 0 216px;
  background: #f5f5f7;
}

.home {
  margin-right: 9px;
}
```
